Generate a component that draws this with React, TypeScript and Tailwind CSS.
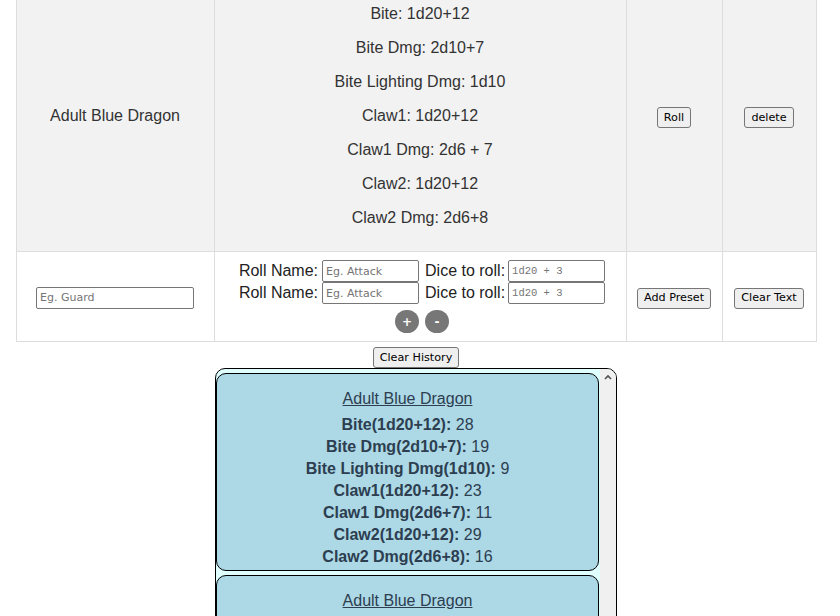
import React from "react";

const attacks = [
  "Bite: 1d20+12",
  "Bite Dmg: 2d10+7",
  "Bite Lighting Dmg: 1d10",
  "Claw1: 1d20+12",
  "Claw1 Dmg: 2d6 + 7",
  "Claw2: 1d20+12",
  "Claw2 Dmg: 2d6+8",
];

const results: [string, string][] = [
  ["Bite(1d20+12):", "28"],
  ["Bite Dmg(2d10+7):", "19"],
  ["Bite Lighting Dmg(1d10):", "9"],
  ["Claw1(1d20+12):", "23"],
  ["Claw1 Dmg(2d6+7):", "11"],
  ["Claw2(1d20+12):", "29"],
  ["Claw2 Dmg(2d6+8):", "16"],
];

function Btn({ children }: { children: React.ReactNode }) {
  return (
    <button className="inline-flex h-[21px] items-center rounded-[3px] border border-[#767676] bg-[#efefef] px-[6px] font-['DejaVu_Sans',sans-serif] text-[11.2px] leading-none text-black">
      {children}
    </button>
  );
}

function Field({ placeholder, w, mono }: { placeholder: string; w: string; mono?: boolean }) {
  return (
    <input
      placeholder={placeholder}
      className={
        (mono
          ? "font-['Liberation_Mono',monospace] text-[10.5px] "
          : "font-['DejaVu_Sans',sans-serif] text-[11px] ") +
        w +
        " h-[22px] rounded-[2px] border border-[#767676] bg-white px-[3px] text-black outline-none placeholder:text-[#757575]"
      }
    />
  );
}

function Circle({ label }: { label: string }) {
  return (
    <span className="flex h-[23px] w-[24px] items-center justify-center rounded-full bg-[#777777] font-['DejaVu_Sans',sans-serif] text-[12px] font-bold leading-none text-white">
      {label}
    </span>
  );
}

function Card() {
  return (
    <div className="rounded-[10px] border border-black bg-[#add8e6] pb-[2px] pt-[14px] text-center text-[16px] leading-[22px] text-[#2c3e50]">
      <div className="mb-[4px] underline">Adult Blue Dragon</div>
      {results.map(([k, v]) => (
        <div key={k}>
          <span className="font-bold">{k}</span> {v}
        </div>
      ))}
    </div>
  );
}

export default function App() {
  return (
    <div className="h-[616px] w-[840px] overflow-hidden bg-white font-['Liberation_Sans',Arial,sans-serif]">
      <div className="w-[832px]">
        <table className="mx-auto mt-[-20px] w-[800px] table-fixed border-collapse text-[16px] text-[#333]">
          <colgroup>
            <col className="w-[198px]" />
            <col className="w-[412px]" />
            <col className="w-[96px]" />
            <col className="w-[94px]" />
          </colgroup>
          <tbody>
            <tr className="bg-[#f2f2f2]">
              <td className="border border-[#ddd] p-[8px] text-center align-middle">Adult Blue Dragon</td>
              <td className="border border-[#ddd] p-[8px] text-center align-middle">
                {attacks.map((a) => (
                  <p key={a} className="my-[16px] leading-[18px]">
                    {a}
                  </p>
                ))}
              </td>
              <td className="border border-[#ddd] p-[8px] text-center align-middle">
                <Btn>Roll</Btn>
              </td>
              <td className="border border-[#ddd] p-[8px] text-center align-middle">
                <Btn>delete</Btn>
              </td>
            </tr>
            <tr className="bg-white">
              <td className="border border-[#ddd] p-[8px] text-center align-middle">
                <Field placeholder="Eg. Guard" w="w-[158px]" />
              </td>
              <td className="border border-[#ddd] p-[8px] align-middle">
                <div className="flex flex-col items-center pl-[4px]">
                  {[0, 1].map((i) => (
                    <div key={i} className="flex h-[22px] items-center text-[#222]">
                      <span className="mr-[4px]">Roll Name:</span>
                      <Field placeholder="Eg. Attack" w="w-[97px]" />
                      <span className="ml-[6px] mr-[3px]">Dice to roll:</span>
                      <Field placeholder="1d20 + 3" w="w-[97px]" mono />
                    </div>
                  ))}
                  <div className="mt-[6px] flex gap-[6px]">
                    <Circle label="+" />
                    <Circle label="-" />
                  </div>
                </div>
              </td>
              <td className="border border-[#ddd] p-[8px] text-center align-middle">
                <Btn>Add Preset</Btn>
              </td>
              <td className="border border-[#ddd] p-[8px] text-center align-middle">
                <Btn>Clear Text</Btn>
              </td>
            </tr>
          </tbody>
        </table>

        <div className="mt-[5px] flex justify-center">
          <Btn>Clear History</Btn>
        </div>

        <div className="mx-auto flex h-[320px] w-[402px] overflow-hidden rounded-t-[10px] border border-black bg-[#e0ffff]">
          <div className="flex flex-1 flex-col gap-[4px] pt-[4px]">
            <Card />
            <Card />
          </div>
          <div className="ml-[1px] flex w-[16px] justify-center bg-[#f0f0f0] pt-[5px]">
            <svg width="8" height="6" viewBox="0 0 8 6">
              <path d="M1 5 L4 2 L7 5" stroke="#505050" strokeWidth="1.6" fill="none" />
            </svg>
          </div>
        </div>
      </div>
    </div>
  );
}
